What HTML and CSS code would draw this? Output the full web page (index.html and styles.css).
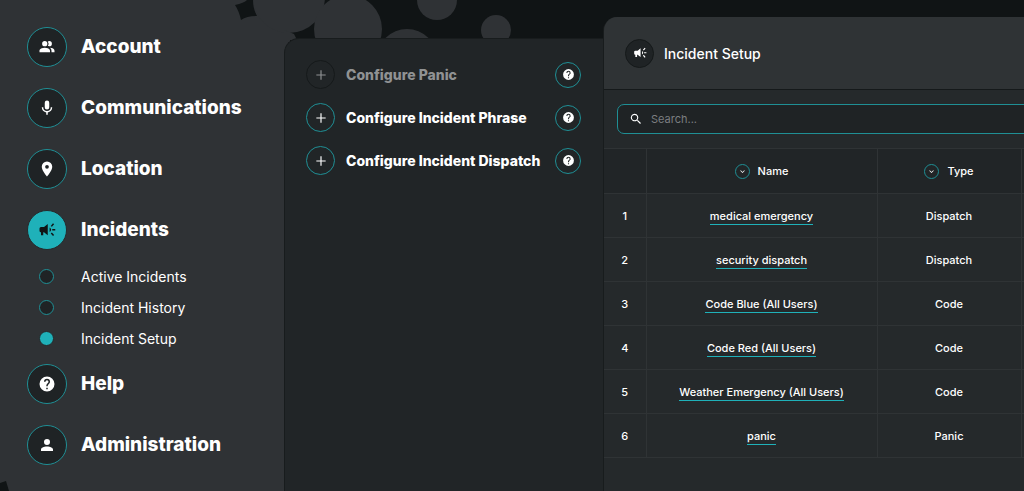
FILE: index.html
```html
<!DOCTYPE html>
<html lang="en">
<head>
  <meta charset="UTF-8">
  <title>Incident Setup</title>
  <meta name="viewport" content="width=device-width, initial-scale=1.0">
  <link rel="stylesheet" href="styles.css">
</head>
<body>

  <!-- shared icons -->
  <svg class="sprite" aria-hidden="true">
    <symbol id="i-group" viewBox="0 0 24 24"><path d="M16 17v2H2v-2s0-4 7-4 7 4 7 4M12.500 7.500a3.500 3.500 0 1 0-7 0 3.500 3.500 0 0 0 7 0m3.440 5.500A5.320 5.320 0 0 1 18 17v2h4v-2s0-3.630-6.060-4M15 4a3.390 3.390 0 0 0-1.930.590 5 5 0 0 1 0 5.820A3.390 3.390 0 0 0 15 11a3.500 3.500 0 0 0 0-7z"/></symbol>
    <symbol id="i-mic" viewBox="0 0 24 24"><path d="M12 2a3 3 0 0 1 3 3v6a3 3 0 0 1-6 0V5a3 3 0 0 1 3-3m7 9c0 3.530-2.610 6.440-6 6.930V21h-2v-3.070c-3.390-.490-6-3.400-6-6.930h2a5 5 0 0 0 10 0z"/></symbol>
    <symbol id="i-pin" viewBox="0 0 24 24"><path d="M12 11.500A2.500 2.500 0 1 1 12 6.500a2.500 2.500 0 0 1 0 5M12 2a7 7 0 0 0-7 7c0 5.250 7 13 7 13s7-7.750 7-13a7 7 0 0 0-7-7z"/></symbol>
    <symbol id="i-horn" viewBox="0 0 24 24"><path d="M13 4L8 8H4a2 2 0 0 0-2 2v3a2 2 0 0 0 2 2v4h3v-4h1l5 4z"/><path d="M15.500 8.500v6a3.300 3.300 0 0 0 0-6z"/><path d="M19 10.500h4v2h-4zM17 6.500l3-3.500 1.500 1.300-3 3.500zM17 16.500l1.500-1.300 3 3.500L20 20z"/></symbol>
    <symbol id="i-help" viewBox="0 0 24 24"><path d="M15.070 11.250l-.9.920C13.450 12.890 13 13.500 13 15h-2v-.500c0-1.110.450-2.110 1.170-2.830l1.240-1.260c.370-.360.590-.860.590-1.410a2 2 0 0 0-4 0H8a4 4 0 1 1 8 0c0 .880-.360 1.670-.930 2.250M13 19h-2v-2h2M12 2a10 10 0 1 0 0 20 10 10 0 0 0 0-20z"/></symbol>
    <symbol id="i-user" viewBox="0 0 24 24"><path d="M12 4a4 4 0 1 1 0 8 4 4 0 0 1 0-8m0 10c4.420 0 8 1.790 8 4v2H4v-2c0-2.210 3.580-4 8-4z"/></symbol>
    <symbol id="i-plus" viewBox="0 0 24 24"><path d="M20 13h-7v7h-2v-7H4v-2h7V4h2v7h7z"/></symbol>
    <symbol id="i-search" viewBox="0 0 24 24"><path d="M9.500 3a6.500 6.500 0 0 1 4.940 10.730l.270.270h.790l5 5-1.500 1.500-5-5v-.790l-.270-.270A6.500 6.500 0 1 1 9.500 3m0 2a4.500 4.500 0 1 0 0 9 4.500 4.500 0 0 0 0-9z"/></symbol>
    <symbol id="i-down" viewBox="0 0 24 24"><path d="M7.400 8.600L12 13.200l4.600-4.600L18 10l-6 6-6-6z"/></symbol>
  </svg>

  <!-- bubbles behind the panels -->
  <svg class="bubbles" width="620" height="60" aria-hidden="true">
    <path class="light" d="M0 0H290V60H0z"/>
    <circle class="light" cx="289" cy="-3" r="36"/>
    <circle class="light" cx="348" cy="29" r="34"/>
    <circle class="light" cx="407" cy="59" r="30"/>
    <circle class="light" cx="437" cy="0" r="20"/>
    <circle class="light" cx="496" cy="30" r="15"/>
    <path class="dark" d="M235 5Q244 3 247 0H253Q253 9 257 16Q247 16 241 20Q239 11 235 5z"/>
    <path class="light" d="M284 30L294 34L297 40H284z"/>
  </svg>

  <nav class="sidebar">
    <ul class="menu">
      <li><a class="item" href="#"><span class="circle"><svg><use href="#i-group"/></svg></span>Account</a></li>
      <li><a class="item" href="#"><span class="circle"><svg><use href="#i-mic"/></svg></span>Communications</a></li>
      <li><a class="item" href="#"><span class="circle"><svg><use href="#i-pin"/></svg></span>Location</a></li>
      <li>
        <a class="item active" href="#"><span class="circle"><svg><use href="#i-horn"/></svg></span>Incidents</a>
        <ul class="submenu">
          <li><a href="#"><span class="dot"></span>Active Incidents</a></li>
          <li><a href="#"><span class="dot"></span>Incident History</a></li>
          <li><a class="active" href="#"><span class="dot"></span>Incident Setup</a></li>
        </ul>
      </li>
      <li><a class="item" href="#"><span class="circle"><svg><use href="#i-help"/></svg></span>Help</a></li>
      <li><a class="item" href="#"><span class="circle"><svg><use href="#i-user"/></svg></span>Administration</a></li>
    </ul>
    <svg class="corner" width="10" height="10" aria-hidden="true"><path class="dark" d="M0 2L6 0L9 10H0z"/></svg>
  </nav>

  <section class="actions">
    <div class="action">
      <button class="add" disabled><span class="plus"><svg><use href="#i-plus"/></svg></span>Configure Panic</button>
      <button class="help" aria-label="Help"><svg><use href="#i-help"/></svg></button>
    </div>
    <div class="action">
      <button class="add"><span class="plus"><svg><use href="#i-plus"/></svg></span>Configure Incident Phrase</button>
      <button class="help" aria-label="Help"><svg><use href="#i-help"/></svg></button>
    </div>
    <div class="action">
      <button class="add"><span class="plus"><svg><use href="#i-plus"/></svg></span>Configure Incident Dispatch</button>
      <button class="help" aria-label="Help"><svg><use href="#i-help"/></svg></button>
    </div>
  </section>

  <main class="content">
    <header class="title">
      <span class="badge"><svg><use href="#i-horn"/></svg></span>
      <h1>Incident Setup</h1>
    </header>
    <div class="wide">
      <label class="search">
        <svg><use href="#i-search"/></svg>
        <input type="text" placeholder="Search..." aria-label="Search">
      </label>
      <table>
        <colgroup><col class="c-num"><col class="c-name"><col class="c-type"><col></colgroup>
        <thead>
          <tr>
            <th></th>
            <th><button class="sort"><span><svg><use href="#i-down"/></svg></span>Name</button></th>
            <th><button class="sort"><span><svg><use href="#i-down"/></svg></span>Type</button></th>
            <th></th>
          </tr>
        </thead>
        <tbody>
          <tr><td>1</td><td><a href="#">medical emergency</a></td><td>Dispatch</td><td></td></tr>
          <tr><td>2</td><td><a href="#">security dispatch</a></td><td>Dispatch</td><td></td></tr>
          <tr><td>3</td><td><a href="#">Code Blue (All Users)</a></td><td>Code</td><td></td></tr>
          <tr><td>4</td><td><a href="#">Code Red (All Users)</a></td><td>Code</td><td></td></tr>
          <tr><td>5</td><td><a href="#">Weather Emergency (All Users)</a></td><td>Code</td><td></td></tr>
          <tr><td>6</td><td><a href="#">panic</a></td><td>Panic</td><td></td></tr>
        </tbody>
      </table>
    </div>
  </main>

</body>
</html>
```
FILE: styles.css
```css
* { box-sizing: border-box; }
body { margin: 0; min-height: 100vh; display: flex; background: #101415; color: #fff; font-family: Inter, "Liberation Sans", sans-serif; overflow: hidden; }
a { color: inherit; text-decoration: none; }
button { padding: 0; border: 0; background: none; color: inherit; font: inherit; cursor: pointer; }
ul { list-style: none; margin: 0; padding: 0; }
svg { fill: currentColor; flex: none; }

.sprite { display: none; }
.bubbles { position: absolute; top: 0; left: 0; }
.light { fill: #2f3235; }
.dark { fill: #101415; }

/* left menu */
.sidebar { flex: 0 0 284px; background: #2f3235; display: flex; flex-direction: column; justify-content: space-between; }
.menu { position: relative; padding: 17px 0 0 27px; }
.item { display: flex; align-items: center; gap: 14px; padding: 10px 0 11px; font-size: 19px; line-height: 40px; font-weight: 800; }
.circle { width: 40px; height: 40px; border: 1px solid #1f8f95; border-radius: 50%; background: #1f2325; display: flex; align-items: center; justify-content: center; }
.circle svg { width: 18px; height: 18px; }
.active .circle { background: #1fb1b9; border-color: #25292b; color: #101415; }
.submenu a { display: flex; align-items: center; gap: 27px; height: 31px; padding-left: 12px; font-size: 14px; }
.dot { width: 15px; height: 15px; border: 1px solid #1f8f95; border-radius: 50%; background: #1f2325; }
.active .dot { background: #1fb1b9; border-color: #25292b; }
.corner { display: block; }

/* action list */
.actions { position: relative; flex: 0 0 319px; margin-top: 38px; padding: 14px 22px 14px 21px; background: #212527; border: 1px solid #181c1d; border-width: 1px 0 0 1px; border-radius: 15px 0 0 0; }
.action { display: flex; align-items: center; justify-content: space-between; height: 43px; }
.add { display: flex; align-items: center; gap: 11px; font-size: 14px; font-weight: 800; }
.plus { width: 29px; height: 29px; border: 1px solid #1f8f95; border-radius: 50%; display: flex; align-items: center; justify-content: center; }
.plus svg { width: 14px; height: 14px; }
.add:disabled { color: #909293; }
.add:disabled .plus { border-color: #15191a; }
.help { width: 26px; height: 26px; border: 1px solid #1f8f95; border-radius: 50%; display: flex; align-items: center; justify-content: center; }
.help svg { width: 13px; height: 13px; }

/* incident table */
.content { position: relative; flex: 1; min-width: 0; margin-top: 17px; overflow: hidden; background: #25292b; border-left: 1px solid #181c1d; border-radius: 14px 0 0 0; }
.title { display: flex; align-items: center; gap: 10px; height: 73px; padding-left: 21px; background: #2f3335; border-bottom: 1px solid #15191a; }
.badge { width: 29px; height: 29px; border: 1px solid #15191a; border-radius: 50%; background: #1f2325; display: flex; align-items: center; justify-content: center; }
.badge svg { width: 14px; height: 14px; }
h1 { margin: 0; font-size: 14px; font-weight: 500; }
.wide { min-width: 640px; }
.search { display: flex; align-items: center; gap: 8px; height: 30px; margin: 14px 13px; padding: 0 11px; border: 1px solid #1f8f95; border-radius: 7px; background: #1f2325; }
.search svg { width: 14px; height: 14px; }
.search input { flex: 1; padding: 0; border: 0; outline: 0; background: none; color: #fff; font: 11px Inter, "Liberation Sans", sans-serif; }
.search input::placeholder { color: #7b7e80; }
table { width: 100%; table-layout: fixed; border-collapse: collapse; font-size: 11px; font-weight: 500; text-align: center; }
.c-num { width: 42px; }
.c-name { width: 231px; }
.c-type { width: 144px; }
th, td { height: 44px; padding: 0; border: 1px solid #2f3335; font-weight: 500; }
th:first-child, td:first-child { border-left: 0; }
th { height: 45px; background: #212527; }
td a { padding-bottom: 1px; border-bottom: 1px solid #1fb1b9; }
.sort { display: flex; align-items: center; gap: 8px; margin: auto; }
.sort span { width: 15px; height: 15px; border: 1px solid #1f8f95; border-radius: 50%; display: flex; align-items: center; justify-content: center; }
.sort svg { width: 9px; height: 9px; }
```
